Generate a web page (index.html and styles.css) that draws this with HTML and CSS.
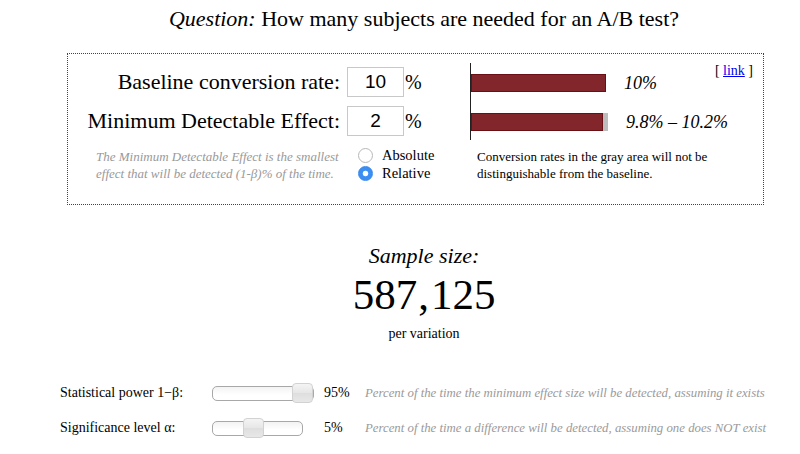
FILE: index.html
```html
<!DOCTYPE html>
<html lang="en">
<head>
<meta charset="utf-8">
<title>Sample Size Calculator</title>
<link rel="stylesheet" href="styles.css">
</head>
<body>
<main class="page">
  <h1 class="title"><em>Question:</em> How many subjects are needed for an A/B test?</h1>

  <section class="panel">
    <div class="inputs">
      <label class="field-label" for="baseline">Baseline conversion rate:</label>
      <input id="baseline" class="num" type="text" value="10">
      <span class="unit">%</span>
      <label class="field-label" for="mde">Minimum Detectable Effect:</label>
      <input id="mde" class="num" type="text" value="2">
      <span class="unit">%</span>
    </div>

    <div class="chart">
      <div class="plot">
        <div class="bar-row">
          <div class="bar bar-base"></div>
          <span class="bar-label">10%</span>
        </div>
        <div class="bar-row">
          <div class="bar bar-mde"></div>
          <div class="bar-gray"></div>
          <span class="bar-label">9.8% – 10.2%</span>
        </div>
      </div>
      <span class="link">[ <a href="#">link</a> ]</span>
    </div>

    <div class="notes">
      <p class="help">The Minimum Detectable Effect is the smallest effect that will be detected (1-β)% of the time.</p>
      <div class="radios">
        <label class="radio-row"><input class="radio" type="radio" name="mode"> Absolute</label>
        <label class="radio-row"><input class="radio" type="radio" name="mode" checked> Relative</label>
      </div>
    </div>

    <p class="caption">Conversion rates in the gray area will not be distinguishable from the baseline.</p>
  </section>

  <section class="result">
    <h2 class="result-title">Sample size:</h2>
    <div class="result-value">587<span class="comma">,</span>125</div>
    <div class="result-unit">per variation</div>
  </section>

  <section class="params">
    <label class="param-label" for="power">Statistical power 1−β:</label>
    <input id="power" class="slider slider-wide" type="range" min="80" max="95" value="95">
    <span class="param-value">95%</span>
    <span class="param-help">Percent of the time the minimum effect size will be detected, assuming it exists</span>

    <label class="param-label" for="alpha">Significance level α:</label>
    <input id="alpha" class="slider slider-narrow" type="range" min="1" max="10" value="5">
    <span class="param-value">5%</span>
    <span class="param-help">Percent of the time a difference will be detected, assuming one does NOT exist</span>
  </section>
</main>
</body>
</html>
```

FILE: styles.css
```css
html, body {
  margin: 0;
  padding: 0;
  background: #fff;
}

body {
  font-family: "Liberation Serif", "Times New Roman", serif;
  color: #000;
  width: 800px;
  height: 454px;
  overflow: hidden;
}

.page {
  padding-top: 6px;
}

.title {
  margin: 0;
  padding-left: 48px;
  font-size: 22px;
  line-height: 26px;
  font-weight: normal;
  text-align: center;
}

.title em {
  font-style: italic;
}

/* ---------- panel ---------- */
.panel {
  box-sizing: border-box;
  width: 697px;
  margin: 21px 0 0 67px;
  border: 1px dotted #444;
  display: grid;
  grid-template-columns: 402px minmax(0, 1fr);
  padding-bottom: 22px;
}

.inputs {
  display: grid;
  grid-template-columns: 279px 57px auto;
  grid-template-rows: 30px 30px;
  row-gap: 9px;
  padding-top: 13px;
  align-items: center;
}

.field-label {
  font-size: 22px;
  line-height: 30px;
  text-align: right;
  padding-right: 7px;
}

.num {
  box-sizing: border-box;
  width: 57px;
  height: 30px;
  margin: 0;
  padding: 0;
  border: 1px solid #c8c8c8;
  border-radius: 0;
  font-family: "Liberation Sans", Arial, sans-serif;
  font-size: 19px;
  text-align: center;
  color: #000;
  background: #fff;
  outline: none;
}

.unit {
  font-size: 20px;
  margin-left: 1px;
}

/* ---------- chart ---------- */
.chart {
  display: flex;
  min-width: 0;
  margin-top: 9px;
}

.plot {
  width: 200px;
  min-width: 0;
  flex: 0 0 200px;
  border-left: 1px solid #222;
  height: 77px;
  box-sizing: border-box;
  padding-top: 11px;
  display: flex;
  flex-direction: column;
  gap: 21px;
}

.bar-row {
  display: flex;
  align-items: center;
  height: 18px;
}

.bar {
  box-sizing: border-box;
  height: 18px;
  background: #83262b;
  border: 1px solid #6a1015;
  flex-shrink: 0;
}

.bar-base {
  width: 135px;
}

.bar-mde {
  width: 132px;
}

.bar-gray {
  flex-shrink: 0;
  width: 5px;
  height: 18px;
  background: #bdbdbd;
}

.bar-label {
  margin-left: 18px;
  font-size: 18px;
  font-style: italic;
  white-space: nowrap;
}

.link {
  margin-left: auto;
  margin-right: 10px;
  font-size: 14px;
  line-height: 16px;
  white-space: nowrap;
  align-self: flex-start;
}

.link a {
  color: #0000ee;
}

/* ---------- notes ---------- */
.notes {
  display: flex;
  gap: 12px;
  padding: 8px 0 0 28px;
}

.help {
  margin: 0;
  width: 250px;
  font-size: 13px;
  line-height: 17px;
  font-style: italic;
  color: #999;
}

.radios {
  margin-top: -2px;
  display: flex;
  flex-direction: column;
}

.radio-row {
  display: flex;
  align-items: center;
  gap: 9px;
  height: 18px;
  font-size: 14.5px;
}

.radio {
  -webkit-appearance: none;
  appearance: none;
  box-sizing: border-box;
  width: 15px;
  height: 15px;
  margin: 0;
  border: 1px solid #b8b8b8;
  border-radius: 50%;
  background: #fff;
}

.radio:checked {
  border-color: #3a86ea;
  background: radial-gradient(circle, #fff 0 2.4px, #3b8ef2 3.2px);
}

.caption {
  margin: 0;
  padding: 8px 0 0 7px;
  max-width: 245px;
  font-size: 13px;
  line-height: 17px;
}

/* ---------- result ---------- */
.result {
  padding-left: 48px;
  text-align: center;
  margin-top: 38px;
}

.result-title {
  margin: 0;
  font-size: 22px;
  line-height: 26px;
  font-weight: normal;
  font-style: italic;
}

.result-value {
  margin-top: 3px;
  font-size: 43px;
  line-height: 45px;
}

.comma {
  margin: 0 2px 0 1px;
}

.result-unit {
  margin-top: 8px;
  font-size: 14px;
  line-height: 18px;
}

/* ---------- params ---------- */
.params {
  margin: 40px 0 0 60px;
  display: grid;
  grid-template-columns: 152px 112px 41px auto;
  grid-auto-rows: 20px;
  row-gap: 15px;
  align-items: center;
}

.param-label,
.param-value {
  font-size: 14px;
}

.param-help {
  font-size: 12.8px;
  font-style: italic;
  color: #9a9a9a;
  white-space: nowrap;
}

.slider {
  -webkit-appearance: none;
  appearance: none;
  height: 20px;
  margin: 0;
  padding: 0;
  background: transparent;
}

.slider-wide {
  width: 102px;
}

.slider-narrow {
  width: 91px;
}

.slider::-webkit-slider-runnable-track {
  box-sizing: border-box;
  height: 15px;
  border: 1px solid #a8a8a8;
  border-radius: 5px;
  background: linear-gradient(#f3f3f3, #fff 60%);
}

.slider::-webkit-slider-thumb {
  -webkit-appearance: none;
  appearance: none;
  box-sizing: border-box;
  width: 21px;
  height: 20px;
  margin-top: -3.5px;
  border: 1px solid #d2d2d2;
  border-radius: 4px;
  background: linear-gradient(#f4f4f4, #e6e6e6 50%, #dedede 52%, #e8e8e8);
}
```
